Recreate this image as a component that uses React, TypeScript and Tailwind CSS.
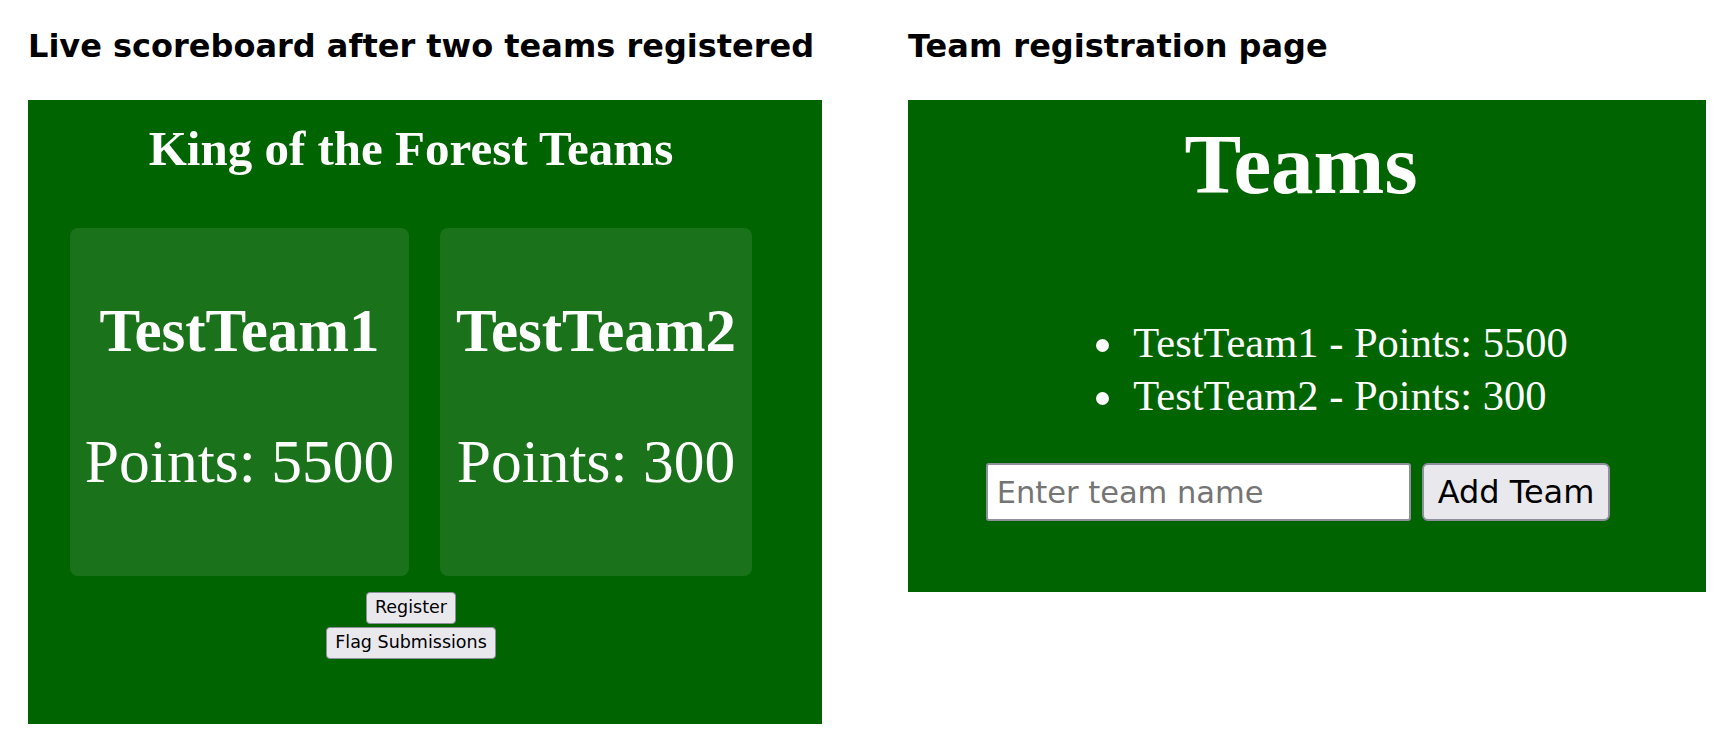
import React from "react";

const sansBold = { fontFamily: '"DejaVu Sans", sans-serif' };

function Heading({ children }: { children: React.ReactNode }) {
  return (
    <h2
      className="h-[36px] text-[32px] leading-[36px] font-bold text-black whitespace-nowrap"
      style={sansBold}
    >
      {children}
    </h2>
  );
}

function Card({ name, points, w }: { name: string; points: number; w: string }) {
  return (
    <div className={`flex h-[348px] flex-col items-center rounded-[8px] bg-[#1a731a] pt-[68px] text-white font-['Liberation_Serif',serif] ${w}`}>
      <div className="text-[61px] leading-[70px] font-bold whitespace-nowrap">{name}</div>
      <div className="mt-[60px] text-[61.5px] leading-[70px] whitespace-nowrap">Points: {points}</div>
    </div>
  );
}

export default function App() {
  return (
    <div className="min-h-[753px] w-[1730px] bg-white">
      <div className="flex pt-[28px]">
        {/* Left column */}
        <div className="ml-[28px] w-[794px]">
          <Heading>Live scoreboard after two teams registered</Heading>
          <div className="mt-[36px] flex h-[624px] flex-col items-center bg-[#006400] pr-[28px] pt-[20px]">
            <h1 className="text-[49px] leading-[57px] font-bold text-white font-['Liberation_Serif',serif] whitespace-nowrap">
              King of the Forest Teams
            </h1>
            <div className="mt-[51px] flex gap-[31px]">
              <Card name="TestTeam1" points={5500} w="w-[339px]" />
              <Card name="TestTeam2" points={300} w="w-[312px]" />
            </div>
            <div className="mt-[16px] flex flex-col items-center gap-[3px] font-['DejaVu_Sans',sans-serif] text-[17.5px] text-black">
              <button className="h-[32px] rounded-[4px] border border-[#8f8f9d] bg-[#e9e9ed] px-[8px] leading-none">
                Register
              </button>
              <button className="h-[32px] rounded-[4px] border border-[#8f8f9d] bg-[#e9e9ed] px-[8px] leading-none">
                Flag Submissions
              </button>
            </div>
          </div>
        </div>

        {/* Right column */}
        <div className="ml-[86px] w-[798px]">
          <Heading>Team registration page</Heading>
          <div className="mt-[36px] flex h-[492px] flex-col items-center bg-[#006400] pr-[12px] pt-[17px]">
            <h1 className="text-[85px] leading-[94px] font-bold text-white font-['Liberation_Serif',serif] whitespace-nowrap">
              Teams
            </h1>
            <ul className="mt-[105px] pl-[99px] text-[42.5px] leading-[53px] text-white font-['Liberation_Serif',serif]">
              <li className="relative whitespace-nowrap">
                <span className="absolute left-[-37px] top-[23px] h-[13px] w-[13px] rounded-full bg-white" />
                TestTeam1 - Points: 5500
              </li>
              <li className="relative whitespace-nowrap">
                <span className="absolute left-[-37px] top-[23px] h-[13px] w-[13px] rounded-full bg-white" />
                TestTeam2 - Points: 300
              </li>
            </ul>
            <div className="mr-[6px] mt-[41px] flex gap-[11px] font-['DejaVu_Sans',sans-serif]">
              <input
                type="text"
                placeholder="Enter team name"
                className="h-[58px] w-[425px] rounded-[3px] border-2 border-[#8f8f9d] bg-white px-[9px] text-[30.5px] text-black placeholder:text-[#757575] outline-none"
              />
              <button className="h-[58px] rounded-[6px] border-2 border-[#8f8f9d] bg-[#e9e9ed] px-[14px] text-[32px] leading-none text-black">
                Add Team
              </button>
            </div>
          </div>
        </div>
      </div>
    </div>
  );
}
